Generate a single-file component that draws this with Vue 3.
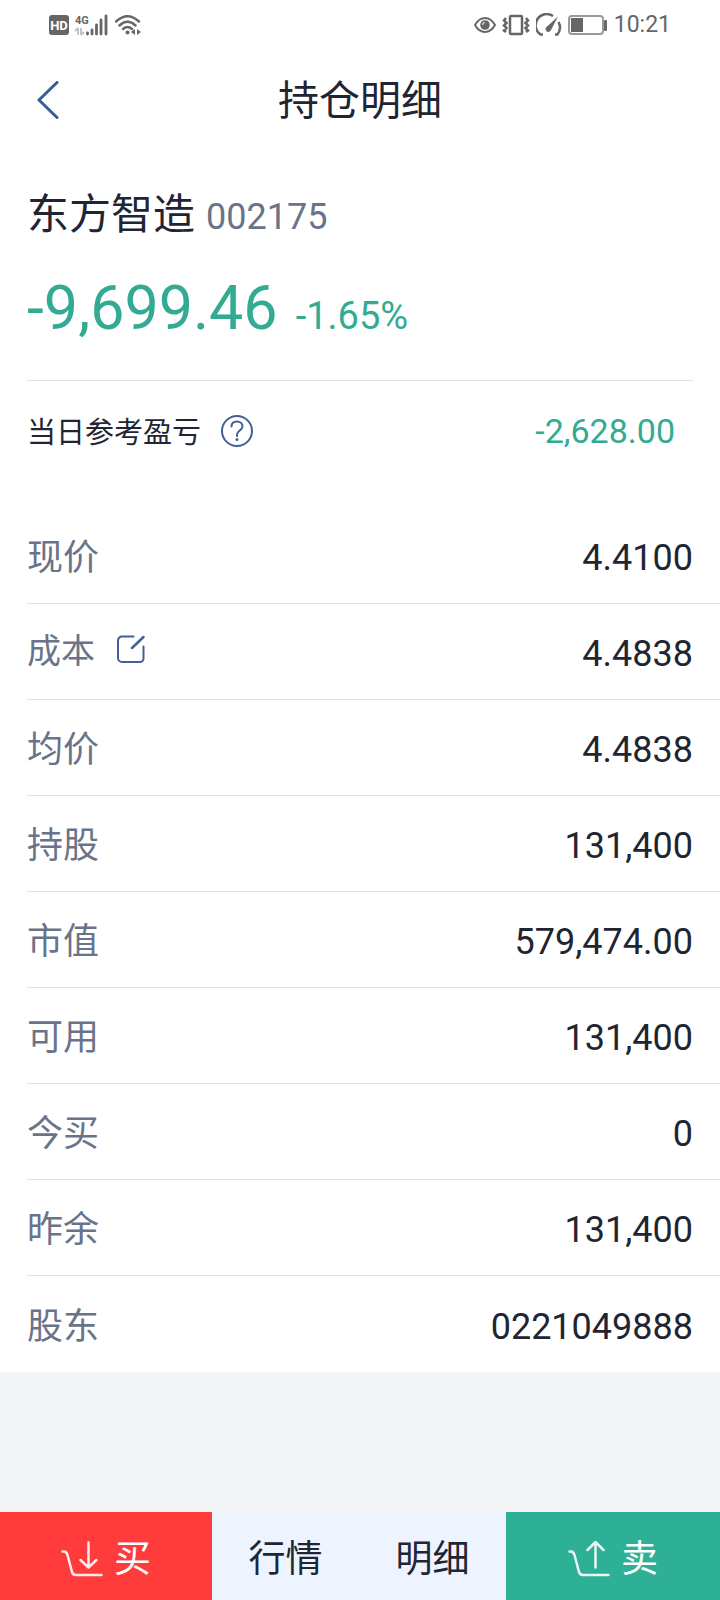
<template>
    <div class="page">
        <!-- Status Bar -->
        <div class="status-bar">
            <div class="status-group">
                <svg width="20" height="20" viewBox="0 0 20 20" aria-hidden="true">
                    <rect width="20" height="20" rx="3" fill="#666" />
                    <text x="10" y="15" text-anchor="middle" font-size="13" font-weight="700" fill="#fff">HD</text>
                </svg>
                <svg width="34" height="22" viewBox="0 0 34 22" aria-hidden="true">
                    <text x="0" y="10" font-size="11" font-weight="700" fill="#666">4G</text>
                    <path d="M3 14v7M3 14l-3 3M6 21v-7M6 21l3-3" stroke="#c4c4c4" stroke-width="2" fill="none" />
                    <path d="M12.500 20v-1M17 20v-4M21.500 20v-9M26 20V6M31 20V2" stroke="#666" stroke-width="2.800" stroke-linecap="round" />
                </svg>
                <svg width="26" height="22" viewBox="0 0 26 22" fill="none" stroke="#666" stroke-width="2.500" aria-hidden="true">
                    <path d="M1 7.500Q12.500-3 24 7.500M4.500 11.500Q12.500 4 20.500 11.500M8 15Q12.500 11 17 15" stroke-linecap="round" />
                    <circle cx="12.500" cy="18.500" r="2" fill="#666" stroke="none" />
                    <path d="M20 15v6l-4-3zM22 15v6l4-3z" fill="#666" stroke="none" />
                </svg>
            </div>
            <div class="status-group">
                <svg width="22" height="18" viewBox="0 0 22 18" fill="none" stroke="#666" stroke-width="2" aria-hidden="true">
                    <path d="M1 9Q5 2 11 2t10 7Q17 16 11 16T1 9z" />
                    <circle cx="11" cy="9" r="4.800" fill="#666" stroke="none" />
                    <path d="M8.500 9a2.500 2.500 0 0 1 2.500-2.500" stroke="#ddd" stroke-width="1.200" />
                </svg>
                <svg width="28" height="22" viewBox="0 0 28 22" fill="none" stroke="#666" stroke-width="2.500" aria-hidden="true">
                    <rect x="8" y="2" width="12" height="18" rx="1" />
                    <path d="M4 4L2 6.500 4.500 9 2 11.500 4.500 14 2 16.500 4 18M24 4L26 6.500 23.500 9 26 11.500 23.500 14 26 16.500 24 18" />
                </svg>
                <svg width="26" height="24" viewBox="0 0 26 24" fill="none" stroke="#666" stroke-width="2.500" aria-hidden="true">
                    <path d="M7 21.500H4.500A11 11 0 0 1 17 3M22.500 9Q26 15.500 21.500 21.500H19" />
                    <path d="M22 3.500L10.500 14a2.800 2.800 0 1 0 4.500 3z" fill="#666" stroke="none" />
                </svg>
                <svg width="40" height="20" viewBox="0 0 40 20" aria-hidden="true">
                    <rect x="1" y="1" width="34" height="18" rx="3" fill="none" stroke="#999" stroke-width="2" />
                    <rect x="3" y="3" width="12" height="14" fill="#666" />
                    <rect x="36" y="5" width="3" height="11" rx="1" fill="#666" />
                </svg>
                <span class="clock">10:21</span>
            </div>
        </div>

        <!-- Title Bar -->
        <header class="title-bar">
            <button class="back-button" type="button" aria-label="返回">
                <svg width="24" height="40" viewBox="0 0 24 40" fill="none" aria-hidden="true">
                    <path d="M21 1.500L3 19l18 17.500" stroke="#375a98" stroke-width="3" stroke-linecap="round" stroke-linejoin="round" />
                </svg>
            </button>
            <h1 class="title">持仓明细</h1>
        </header>

        <main class="content">
            <!-- Stock Summary -->
            <section class="summary">
                <div class="stock">
                    <h2 class="stock-name">东方智造</h2>
                    <span class="stock-code">002175</span>
                </div>
                <div class="profit">
                    <span class="profit-amount">-9,699.46</span>
                    <span class="profit-rate">-1.65%</span>
                </div>
            </section>

            <section class="daily">
                <span class="daily-label">当日参考盈亏</span>
                <button class="icon-button" type="button" aria-label="当日参考盈亏说明">
                    <svg width="32" height="32" viewBox="0 0 32 32" fill="none" stroke="#435f98" stroke-width="2" aria-hidden="true">
                        <circle cx="16" cy="16" r="15" />
                        <path d="M10.500 11.500C10.500 8 13 6.500 16 6.500s5.500 2 5.500 5c0 3.500-5.500 4.500-5.500 8V21" stroke-linecap="round" />
                        <circle cx="16" cy="24.500" r="1.500" fill="#435f98" stroke="none" />
                    </svg>
                </button>
                <span class="daily-value">-2,628.00</span>
            </section>

            <!-- Position Details -->
            <dl class="details">
                <div v-for="row in rows" :key="row.label" class="row">
                    <dt class="row-label" :class="{ editable: row.editable }">
                        {{ row.label }}
                        <button v-if="row.editable" class="icon-button" type="button" aria-label="修改成本">
                            <svg width="28" height="28" viewBox="0 0 28 28" fill="none" stroke="#435f98" stroke-width="2" stroke-linecap="round" aria-hidden="true">
                                <path d="M16.500 1.500H5A4 4 0 0 0 1 5.500V23a4 4 0 0 0 4 4h18a3.500 3.500 0 0 0 3.500-3.500V11.500" />
                                <path d="M26.500 2L15 13" stroke-width="2.500" />
                            </svg>
                        </button>
                    </dt>
                    <dd class="row-value">{{ row.value }}</dd>
                </div>
            </dl>
        </main>

        <!-- Bottom Actions -->
        <nav class="actions">
            <button class="action buy" type="button">
                <svg width="42" height="38" viewBox="0 0 42 38" class="trade-icon" aria-hidden="true">
                    <path d="M1.500 10.500H3Q5.500 10.500 6.500 14l4.500 17q1 3 4 3h25.500" />
                    <path d="M27.500 1.500V26M19.500 19l8 7.500 8-7.500" />
                </svg>
                买
            </button>
            <button class="action" type="button">行情</button>
            <button class="action" type="button">明细</button>
            <button class="action sell" type="button">
                <svg width="42" height="38" viewBox="0 0 42 38" class="trade-icon" aria-hidden="true">
                    <path d="M1.500 10.500H3Q5.500 10.500 6.500 14l4.500 17q1 3 4 3h25.500" />
                    <path d="M27.500 26.500V1.500M19.500 9l8-8 8 8" />
                </svg>
                卖
            </button>
        </nav>
    </div>
</template>

<script setup>
const rows = [
    { label: '现价', value: '4.4100' },
    { label: '成本', value: '4.4838', editable: true },
    { label: '均价', value: '4.4838' },
    { label: '持股', value: '131,400' },
    { label: '市值', value: '579,474.00' },
    { label: '可用', value: '131,400' },
    { label: '今买', value: '0' },
    { label: '昨余', value: '131,400' },
    { label: '股东', value: '0221049888' }
];
</script>

<style>
body {
    margin: 0;
    background: #f3f4f6;
}
</style>

<style scoped>
.page {
    display: flex;
    flex-direction: column;
    min-height: 100vh;
    font-family: Roboto, 'Noto Sans CJK SC', sans-serif;
    color: #1f2533;
}

button {
    padding: 0;
    border: 0;
    background: none;
    font: inherit;
    color: inherit;
    cursor: pointer;
}

svg {
    display: block;
    flex: none;
}

/* Status Bar */
.status-bar {
    display: flex;
    align-items: center;
    justify-content: space-between;
    height: 50px;
    padding: 0 49px;
    background: #fff;
}

.status-group {
    display: flex;
    align-items: center;
    gap: 6px;
}

.clock {
    font-size: 23px;
    line-height: 28px;
    color: #666;
}

/* Title Bar */
.title-bar {
    display: grid;
    grid-template-columns: 60px 1fr 60px;
    align-items: center;
    height: 102px;
    background: #fff;
}

.back-button {
    display: flex;
    justify-content: flex-end;
}

.title {
    margin: 0;
    font-size: 41px;
    font-weight: 400;
    line-height: 60px;
    text-align: center;
}

.content {
    background: #fff;
}

/* Stock Summary */
.summary {
    margin: 0 27px;
    padding: 33px 0 34px;
    border-bottom: 1px solid #dfe1e3;
}

.stock {
    display: flex;
    align-items: baseline;
    gap: 11px;
    margin-bottom: 25px;
}

.stock-name {
    margin: 0;
    font-size: 42px;
    font-weight: 400;
    line-height: 60px;
}

.stock-code {
    font-size: 36px;
    line-height: 60px;
    color: #697389;
}

.profit {
    display: flex;
    align-items: baseline;
    gap: 18px;
    color: #32ab92;
}

.profit-amount {
    font-size: 61px;
    line-height: 72px;
}

.profit-rate {
    font-size: 38px;
    line-height: 60px;
}

.daily {
    display: flex;
    align-items: center;
    height: 100px;
    padding: 0 45px 0 27px;
}

.daily-label {
    margin-right: 20px;
    padding-top: 4px;
    font-size: 29px;
    line-height: 40px;
}

.daily-value {
    margin-left: auto;
    font-size: 34px;
    line-height: 40px;
    color: #32ab92;
}

/* Position Details */
.details {
    margin: 0;
    padding: 27px 0 0 27px;
}

.row {
    display: flex;
    align-items: center;
    justify-content: space-between;
    box-sizing: border-box;
    height: 96px;
    padding: 5px 27px 0 0;
    border-bottom: 1px solid #dfe1e3;
}

.row:last-child {
    border-bottom: 0;
}

.row-label {
    font-size: 36px;
    line-height: 48px;
    color: #697389;
}

.row-label.editable {
    display: flex;
    align-items: center;
    gap: 22px;
    padding-bottom: 6px;
    font-size: 34px;
}

.editable .icon-button {
    padding-bottom: 4px;
}

.row-value {
    margin: 0;
    font-size: 36px;
    line-height: 48px;
}

/* Bottom Actions */
.actions {
    position: sticky;
    bottom: 0;
    display: grid;
    grid-template-columns: 212fr 147fr 147fr 214fr;
    height: 88px;
    margin-top: auto;
    background: #edf4ff;
}

.action {
    display: flex;
    align-items: center;
    justify-content: center;
    gap: 11px;
    padding-top: 8px;
    font-size: 37px;
    line-height: 48px;
}

.buy {
    background: #ff3b3c;
    color: #fff;
}

.sell {
    background: #2db095;
    color: #fff;
}

.trade-icon {
    fill: none;
    stroke: currentColor;
    stroke-width: 2.5px;
    stroke-linecap: round;
    stroke-linejoin: round;
    opacity: 0.9;
}
</style>
